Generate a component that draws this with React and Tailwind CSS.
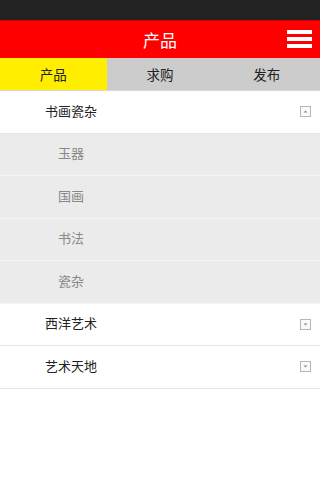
import React from "react";

const tabs = ["产品", "求购", "发布"];

const groups = [
  { title: "书画瓷杂", open: true, items: ["玉器", "国画", "书法", "瓷杂"] },
  { title: "西洋艺术", open: false, items: [] },
  { title: "艺术天地", open: false, items: [] },
];

function ToggleIcon({ open }) {
  return (
    <svg width="11" height="11" viewBox="0 0 11 11" className="mr-[9px]">
      <rect x="0.5" y="0.5" width="10" height="10" fill="#fafafa" stroke="#b5b5b5" />
      {open ? (
        <path d="M3.5 6.5 L5.5 4.5 L7.5 6.5 Z" fill="#8a8a8a" />
      ) : (
        <path d="M3.5 4.5 L5.5 6.5 L7.5 4.5 Z" fill="#8a8a8a" />
      )}
    </svg>
  );
}

export default function App() {
  return (
    <div
      className="w-[320px] h-[480px] bg-white overflow-hidden"
      style={{ fontFamily: '"Noto Sans CJK SC", "Noto Sans", sans-serif' }}
    >
      <div className="h-[20px] bg-[#222222]" />
      <div className="h-[38px] bg-[#ff0000] border-t border-[#d00000] flex items-center justify-center relative">
        <span className="text-white text-[17px]">产品</span>
        <div className="absolute right-[8px] top-[9px] flex flex-col gap-[3px]">
          <div className="w-[25px] h-[4px] bg-white" />
          <div className="w-[25px] h-[4px] bg-white" />
          <div className="w-[25px] h-[4px] bg-white" />
        </div>
      </div>
      <div className="grid grid-cols-3 h-[33px] bg-[#cccccc] border-b border-[#d8d8d8]">
        {tabs.map((t, i) => (
          <div
            key={t}
            className={
              "flex items-center justify-center text-[13.5px] text-[#222] " +
              (i === 0 ? "bg-[#ffee00]" : "")
            }
          >
            {t}
          </div>
        ))}
      </div>
      <div>
        {groups.map((g) => (
          <div key={g.title}>
            <div className="h-[42.5px] flex items-center justify-between border-b border-[#e6e6e6] bg-white">
              <span className="pl-[45px] pb-[3px] text-[13px] text-[#222]">{g.title}</span>
              <ToggleIcon open={g.open} />
            </div>
            {g.items.map((it) => (
              <div
                key={it}
                className="h-[42.5px] flex items-center bg-[#ebebeb] border-b border-[#f4f4f4]"
              >
                <span className="pl-[58px] pb-[3px] text-[13px] text-[#888]">{it}</span>
              </div>
            ))}
          </div>
        ))}
      </div>
    </div>
  );
}
